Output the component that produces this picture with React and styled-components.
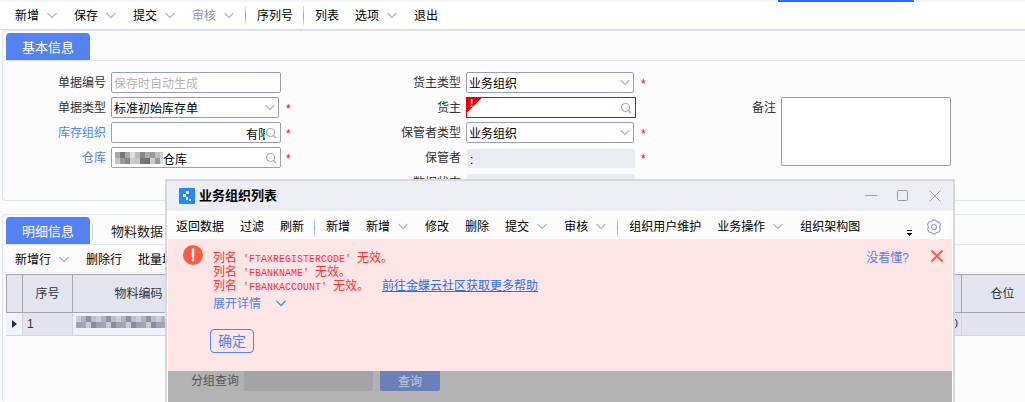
import { useState } from "react";
import styled, { createGlobalStyle, css } from "styled-components";

const GlobalStyle = createGlobalStyle`
  * {
    box-sizing: border-box;
  }

  body {
    margin: 0;
    background: #fafcff;
    overflow: hidden;
  }

  body, button, input, select, textarea {
    font-family: "Liberation Sans", "Noto Sans CJK SC", sans-serif;
    font-size: 12px;
    line-height: 16px;
    color: #000;
  }
`;

const Page = styled.div`
  position: relative;
  display: flex;
  flex-direction: column;
  height: 100vh;
  overflow: hidden;
`;

const TopStrip = styled.div`
  display: flex;
  justify-content: flex-end;
  flex-shrink: 0;
  height: 2px;
  padding-right: 111px;
  background: #f5f6fc;
`;

const ActiveMark = styled.div`
  width: 136px;
  background: #2b6ef5;
`;

const Toolbar = styled.div`
  display: flex;
  align-items: center;
  flex-shrink: 0;
  height: ${(props) => props.$height}px;
  padding: ${(props) => props.$drop || 0}px ${(props) => props.$end || 0}px 0 ${(props) => props.$indent || 0}px;
  background: ${(props) => props.$bg || "#fcfcfc"};
  border-bottom: 1px solid ${(props) => props.$lineColor || "#eceef2"};
  white-space: nowrap;
`;

const ToolButton = styled.button`
  display: flex;
  align-items: center;
  gap: 7px;
  padding: 0 8px;
  border: 0;
  background: none;
  color: ${(props) => (props.disabled ? "#999" : "#000")};
`;

const Divider = styled.span`
  width: 1px;
  height: 19px;
  margin: 0 3px 0 2px;
  background: linear-gradient(#dce8fa, #7fa6e0, #dce8fa);
`;

const Panel = styled.section`
  display: flex;
  flex-direction: column;
  flex-shrink: 0;
  margin-left: 2px;
  background: #fcfcfc;
  border: 1px solid #e0e4ee;
  border-right: 0;
  border-radius: 4px 0 0 4px;
`;

const DetailPanel = styled(Panel)`
  flex: 1;
  min-height: 0;
  margin-top: 13px;
  border-bottom: 0;
`;

const Tabs = styled.div`
  display: flex;
  align-items: flex-end;
  height: 30px;
  padding: 2px 0 0 3px;
  border-bottom: 1px solid #e0e4ee;
`;

const Tab = styled.button`
  height: 27px;
  padding: 2px 16px 0;
  border: 0;
  border-radius: 4px 4px 0 0;
  font-size: 13px;
  color: ${(props) => (props.$active ? "#fff" : "#222")};
  background: ${(props) => (props.$active ? "#5582f3" : "none")};
`;

const TabDivider = styled.span`
  width: 1px;
  height: 16px;
  margin: 0 2px 4px;
  background: #d5dae6;
`;

const Form = styled.div`
  display: grid;
  grid-template-columns: 355px 315px 1fr;
  padding: 11px 0 7px;
`;

const Column = styled.div`
  display: flex;
  flex-direction: column;
  gap: 4px;
  padding-top: ${(props) => (props.$offset ? 25 : 0)}px;
`;

const Row = styled.div`
  display: flex;
  align-items: flex-start;
  height: 21px;
`;

const Label = styled.label`
  width: 103px;
  margin-right: 5px;
  padding-top: 3px;
  text-align: right;
  color: ${(props) => (props.$link ? "#5582f3" : "#333")};
`;

const Field = styled.div`
  display: flex;
  align-items: center;
  justify-content: flex-end;
  width: ${(props) => (props.$kind === "select" ? 168 : 170)}px;
  height: 21px;
  padding-right: ${(props) => (props.$kind === "search" ? 3 : 2)}px;
  background: #fff;
  border: 1px solid #95a0b8;
  border-radius: 2px;
  ${(props) =>
    props.$error &&
    css`
      background: linear-gradient(135deg, #e60000 10px, #fff 10px);
      border-color: #e60000;
      border-radius: 0;
    `}
  ${(props) =>
    props.$off &&
    css`
      width: 168px;
      height: 19px;
      margin: 2px 1px 0;
      background: #e8ebf0;
      border-color: #e8ebf0;
    `}
`;

const ErrorMark = styled.span`
  width: 10px;
  height: 19px;
  padding-left: 3px;
  color: #fff;
  font-size: 10px;
  font-weight: bold;
  line-height: 11px;
`;

const inputBase = css`
  flex: 1;
  min-width: 0;
  height: 19px;
  padding: 2px 0 0 2px;
  border: 0;
  outline: 0;
  background: none;
`;

const Input = styled.input`
  ${inputBase}
  padding-left: ${(props) => (props.$flush ? 0 : 2)}px;

  &::placeholder {
    color: #b4b4b4;
  }
`;

const Select = styled.select`
  ${inputBase}
  appearance: none;
`;

/* a long name whose start is blanked out and whose end runs under the icon */
const ClippedInput = styled.input`
  width: 19px;
  height: 19px;
  padding: 2px 0 0;
  border: 0;
  outline: 0;
  background: none;
`;

const Textarea = styled.textarea`
  width: 170px;
  height: 69px;
  border: 1px solid #95a0b8;
  border-radius: 2px;
  resize: none;
`;

const Star = styled.span`
  margin-left: ${(props) => (props.$wide ? 7 : 5)}px;
  padding-top: 4px;
  color: #f00;
`;

const Mosaic = styled.svg`
  flex-shrink: 0;
  margin-left: 3px;
`;

const Table = styled.table`
  width: calc(100% + 16px);
  margin: 1px 0 0 3px;
  border-collapse: collapse;
  table-layout: fixed;
  color: #333;

  th {
    height: 38px;
    padding: 0;
    font-weight: normal;
    background: #e2e5ef;
    border: 1px solid #a3a7b1;
  }

  td {
    height: 23px;
    padding: 0 0 0 4px;
    background: #e1e4ee;
    border: 1px solid #d3d5db;
    border-left-color: #f3f4f8;
  }

  td:first-child {
    padding-left: 5px;
    background: #f2f3f7;
  }
`;

const CodeCell = styled.td`
  && {
    padding: 0;
    background: #eef3ff;
  }
`;

const NumberCell = styled.td`
  && {
    padding-right: 3px;
    text-align: right;
  }
`;

const Dialog = styled.div`
  position: absolute;
  top: 179px;
  left: 165px;
  right: 70px;
  bottom: 0;
  display: flex;
  flex-direction: column;
  background: #fff;
  border: 2px solid #d7d8de;
  border-bottom: 0;
`;

const TitleBar = styled.div`
  display: flex;
  align-items: center;
  flex-shrink: 0;
  height: 30px;
  margin-bottom: 2px;
  padding: 0 6px 0 12px;
  background: #edeef3;
`;

const Title = styled.h1`
  flex: 1;
  margin: 0 0 0 4px;
  font-size: 13px;
  line-height: 18px;
`;

const IconButton = styled.button`
  display: flex;
  align-items: center;
  justify-content: center;
  width: ${(props) => props.$width || 24}px;
  height: 22px;
  margin-left: ${(props) => props.$gap || 0}px;
  padding: 0;
  border: 0;
  background: ${(props) => props.$bg || "none"};
`;

const Spacer = styled.span`
  flex: 1;
`;

const DialogBody = styled.div`
  display: flex;
  flex-direction: column;
  flex: 1;
  min-height: 0;
  margin: 0 1px;
`;

const Alert = styled.div`
  display: flex;
  align-items: flex-start;
  flex-shrink: 0;
  height: 131px;
  padding: 5px 3px 0 15px;
  background: #ffe6e6;
`;

const AlertText = styled.div`
  flex: 1;
  padding: 6px 0 0 7px;
`;

const Message = styled.p`
  margin: 0 0 0 3px;
  line-height: 14px;
  color: #ff3333;
`;

const Code = styled.code`
  font-family: "Liberation Mono", monospace;
  font-size: 10px;
  line-height: 10px;
  white-space: pre;
`;

const HelpLink = styled.a`
  margin-left: 13px;
  color: #2b6ef5;
`;

const ExplainLink = styled.a`
  padding-top: 5px;
  color: #5582f3;
  text-decoration: none;
`;

const Expand = styled.button`
  display: flex;
  align-items: center;
  gap: 14px;
  margin: 3px 0 17px 3px;
  padding: 0;
  border: 0;
  background: none;
  color: #5582f3;
`;

const Confirm = styled.button`
  width: 44px;
  height: 24px;
  padding: 0;
  border: 1px solid #5582f3;
  border-radius: 4px;
  background: none;
  color: #5582f3;
  font-size: 14px;
`;

const Query = styled.div`
  display: flex;
  align-items: flex-start;
  flex: 1;
  padding-left: 23px;
  background: #b2b2b2;

  label {
    padding-top: 2px;
    color: #555;
  }

  input {
    width: 129px;
    height: 20px;
    margin: 0 7px 0 5px;
    border: 0;
    border-radius: 0 0 2px 2px;
    background: #a2a4a8;
  }

  button {
    width: 60px;
    height: 20px;
    padding: 1px 0 0;
    border: 0;
    border-radius: 0 0 2px 2px;
    background: #6a80b9;
    color: #c4c8d2;
  }
`;

function Chevron({ color = "#b0bace" }) {
  return (
    <svg width="12" height="8" viewBox="0 0 12 8" fill="none" stroke={color} strokeWidth="1.3">
      <path d="M1.500 1 6 5.500 10.500 1" />
    </svg>
  );
}

function SearchIcon() {
  return (
    <svg width="12" height="12" viewBox="0 0 12 12" fill="none" stroke="#a3adc2" strokeWidth="1.2">
      <circle cx="5.5" cy="5.5" r="4" />
      <path d="m8.5 8.5 2.5 2.5" />
    </svg>
  );
}

function CloseIcon({ color, width = 1 }) {
  return (
    <svg width="14" height="14" viewBox="0 0 14 14" stroke={color} strokeWidth={width}>
      <path d="m1.5 1.5 11 11m0-11-11 11" />
    </svg>
  );
}

function GearIcon() {
  return (
    <svg width="16" height="16" viewBox="0 0 16 16" fill="none" stroke="#9ba6bd" strokeWidth="1.2">
      <path
        d="M6.300 1.200h3.400l.9 1.500 2.200.1 1.700 2.800-.9 2.400.9 2.400-1.700 2.800-2.200.1-.9 1.500H6.300l-.9-1.500-2.200-.1-1.700-2.800.9-2.400-.9-2.400 1.700-2.800 2.200-.1z"
        strokeLinejoin="round"
      />
      <circle cx="8" cy="8" r="2.500" />
    </svg>
  );
}

function Pixels({ width, shades }) {
  return (
    <Mosaic width={width} height="12" aria-hidden="true">
      {shades.map((shade, i) => (
        <rect key={i} x={Math.floor(i / 2) * 5} y={(i % 2) * 6} width="5" height="6" fill={shade} />
      ))}
    </Mosaic>
  );
}

const nameShades = ["#aaa", "#c4c4c4", "#777", "#999", "#aaa", "#888", "#ddd", "#ccc", "#bbb", "#c8c8c8", "#888", "#777", "#aaa", "#707070", "#999", "#ccc", "#bbb", "#999", "#ccc", "#ddd"];
const codeShades = ["#c9cede", "#9ea2b0", "#b2b4c4", "#aaa6a8", "#90939f", "#c8cad4", "#c2bfc4", "#858b9c"];

function ToolItems({ items }) {
  return items.map((item, i) =>
    item === "|" ? (
      <Divider key={i} />
    ) : (
      <ToolButton key={i} type="button" disabled={item.disabled}>
        {item.text}
        {item.menu && <Chevron />}
      </ToolButton>
    )
  );
}

function FormRow({ id, label, link, kind, value, placeholder, required, error, off, clipped, masked }) {
  return (
    <Row>
      <Label htmlFor={id} $link={link}>
        {label}
      </Label>
      <Field $kind={kind} $error={error} $off={off}>
        {error && <ErrorMark>!</ErrorMark>}
        {masked && <Pixels width="48" shades={nameShades} />}
        {kind === "select" && (
          <Select id={id}>
            <option>{value}</option>
          </Select>
        )}
        {kind !== "select" && clipped && <ClippedInput id={id} defaultValue={value} />}
        {kind !== "select" && !clipped && (
          <Input id={id} defaultValue={value} placeholder={placeholder} disabled={off} $flush={masked} />
        )}
        {kind === "select" && <Chevron />}
        {kind === "search" && <SearchIcon />}
      </Field>
      {required && <Star $wide={kind === "select"}>*</Star>}
    </Row>
  );
}

const mainTools = [
  { text: "新增", menu: true },
  { text: "保存", menu: true },
  { text: "提交", menu: true },
  { text: "审核", menu: true, disabled: true },
  "|",
  { text: "序列号" },
  "|",
  { text: "列表" },
  { text: "选项", menu: true },
  { text: "退出" },
];

const dialogTools = [
  { text: "返回数据" },
  { text: "过滤" },
  { text: "刷新" },
  "|",
  { text: "新增" },
  { text: "新增", menu: true },
  { text: "修改" },
  { text: "删除" },
  { text: "提交", menu: true },
  { text: "审核", menu: true },
  "|",
  { text: "组织用户维护" },
  { text: "业务操作", menu: true },
  { text: "组织架构图" },
];

const detailTools = [{ text: "新增行", menu: true }, { text: "删除行" }, { text: "批量填充" }];

const missingColumns = ["FTAXREGISTERCODE", "FBANKNAME", "FBANKACCOUNT"];

function OrgDialog({ onClose }) {
  const [showAlert, setShowAlert] = useState(true);

  return (
    <Dialog role="dialog" aria-label="业务组织列表">
      <TitleBar>
        <svg width="16" height="16" viewBox="0 0 16 16">
          <rect width="16" height="16" rx="1" fill="#2489f4" />
          <path fill="#fff" d="M7 3h3v3H7zM4 6h3v3H4zM7 9h2v3H7zM10 11h2v2h-2z" />
        </svg>
        <Title>业务组织列表</Title>
        <IconButton type="button" aria-label="最小化">
          <svg width="12" height="12" stroke="#9ba6bd">
            <path d="M0 5.500h12" />
          </svg>
        </IconButton>
        <IconButton type="button" aria-label="最大化" $gap={8}>
          <svg width="12" height="12" fill="none" stroke="#909cb5">
            <rect x=".5" y=".5" width="10" height="10" rx="1" />
          </svg>
        </IconButton>
        <IconButton type="button" aria-label="关闭" $gap={8} onClick={onClose}>
          <CloseIcon color="#909cb5" />
        </IconButton>
      </TitleBar>
      <DialogBody>
        <Toolbar $height={27} $drop={2} $end={5}>
          <ToolItems items={dialogTools} />
          <Spacer />
          <IconButton type="button" aria-label="更多" $width={12}>
            <svg width="6" height="20">
              <path d="M0 13h5v1H0zM0 16h5v1H4v1H3v1H2v-1H1v-1H0z" />
            </svg>
          </IconButton>
          <IconButton type="button" aria-label="设置" $width={27} $gap={4} $bg="#fff">
            <GearIcon />
          </IconButton>
        </Toolbar>
        {showAlert && (
          <Alert role="alert">
            <svg width="20" height="20" viewBox="0 0 20 20">
              <circle cx="10" cy="10" r="10" fill="#ff5a46" />
              <path d="M10 4.500v7" stroke="#fff" strokeWidth="2.500" strokeLinecap="round" />
              <circle cx="10" cy="15" r="1.400" fill="#fff" />
            </svg>
            <AlertText>
              {missingColumns.map((name, i) => (
                <Message key={name}>
                  列名<Code>{` '${name}' `}</Code>无效。
                  {i === 2 && <HelpLink href="#help">前往金蝶云社区获取更多帮助</HelpLink>}
                </Message>
              ))}
              <Expand type="button">
                展开详情
                <Chevron color="#2d9bf0" />
              </Expand>
              <Confirm type="button" onClick={() => setShowAlert(false)}>
                确定
              </Confirm>
            </AlertText>
            <ExplainLink href="#explain">没看懂?</ExplainLink>
            <IconButton type="button" aria-label="关闭提示" $gap={16} onClick={() => setShowAlert(false)}>
              <CloseIcon color="#ff5a46" width={2} />
            </IconButton>
          </Alert>
        )}
        <Query>
          <label htmlFor="group">分组查询</label>
          <input id="group" />
          <button type="button">查询</button>
        </Query>
      </DialogBody>
    </Dialog>
  );
}

export default function App() {
  const [open, setOpen] = useState(true);

  return (
    <Page>
      <GlobalStyle />
      <TopStrip>
        <ActiveMark />
      </TopStrip>
      <Toolbar $height={28} $indent={7} $bg="#fff" $lineColor="#d8dfe3">
        <ToolItems items={mainTools} />
      </Toolbar>
      <Panel>
        <Tabs>
          <Tab type="button" $active>
            基本信息
          </Tab>
        </Tabs>
        <Form>
          <Column>
            <FormRow id="billNo" label="单据编号" placeholder="保存时自动生成" />
            <FormRow id="billType" label="单据类型" kind="select" value="标准初始库存单" required />
            <FormRow id="stockOrg" label="库存组织" kind="search" value="有限" link clipped required />
            <FormRow id="stock" label="仓库" kind="search" value="仓库" link masked required />
          </Column>
          <Column>
            <FormRow id="ownerType" label="货主类型" kind="select" value="业务组织" required />
            <FormRow id="owner" label="货主" kind="search" error />
            <FormRow id="keeperType" label="保管者类型" kind="select" value="业务组织" required />
            <FormRow id="keeper" label="保管者" value=":" off required />
            <FormRow id="status" label="数据状态" value="创建" off />
          </Column>
          <Column $offset>
            <Row>
              <Label htmlFor="note">备注</Label>
              <Textarea id="note" />
            </Row>
          </Column>
        </Form>
      </Panel>
      <DetailPanel>
        <Tabs>
          <Tab type="button" $active>
            明细信息
          </Tab>
          <TabDivider />
          <Tab type="button">物料数据</Tab>
        </Tabs>
        <Toolbar $height={28} $indent={4} $drop={3}>
          <ToolItems items={detailTools} />
        </Toolbar>
        <Table>
          <colgroup>
            <col width="16" />
            <col width="50" />
            <col width="132" />
            <col />
            <col width="82" />
          </colgroup>
          <thead>
            <tr>
              <th />
              <th>序号</th>
              <th>物料编码</th>
              <th />
              <th>仓位</th>
            </tr>
          </thead>
          <tbody>
            <tr>
              <td>
                <svg width="5" height="8">
                  <path d="M0 0 5 4 0 8z" fill="#17346b" />
                </svg>
              </td>
              <td>1</td>
              <CodeCell>
                <Pixels width="100" shades={[...codeShades, ...codeShades, ...codeShades, ...codeShades, ...codeShades]} />
              </CodeCell>
              <NumberCell>0</NumberCell>
              <td />
            </tr>
          </tbody>
        </Table>
      </DetailPanel>
      {open && <OrgDialog onClose={() => setOpen(false)} />}
    </Page>
  );
}
